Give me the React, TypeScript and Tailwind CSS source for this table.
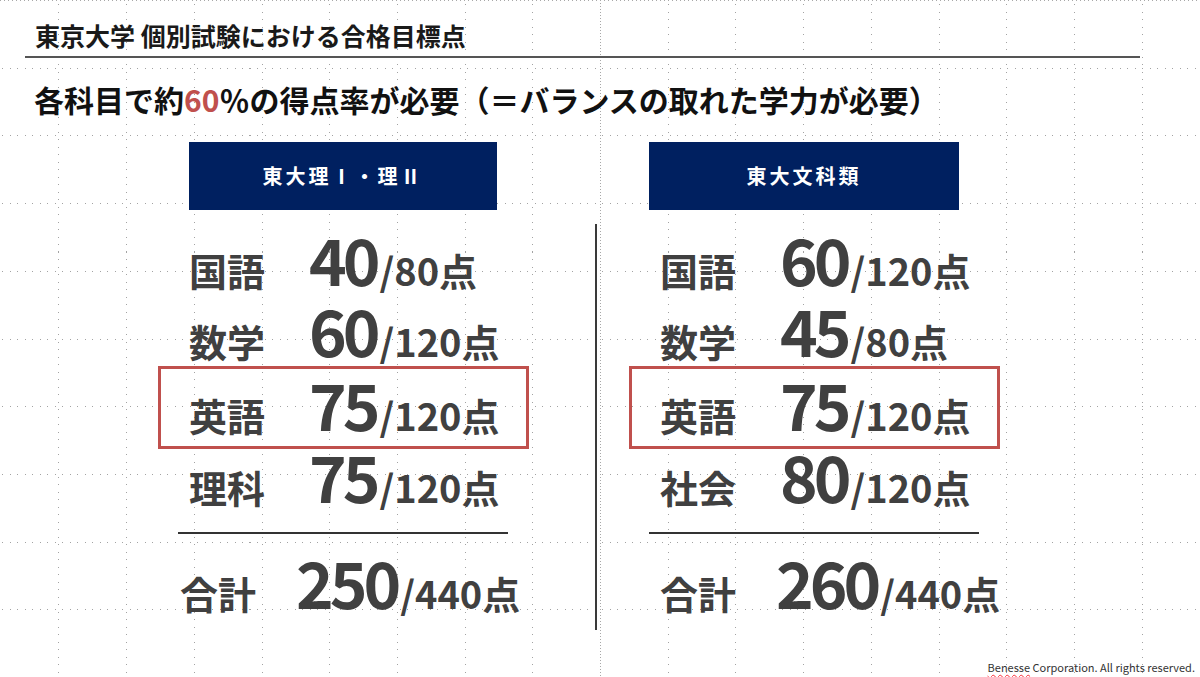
import React from 'react';

type Row = [string, string, string];

interface PanelProps {
  title: string;
  headerClass: string;
  rows: Row[];
  total: [string, string];
  totalClass: string;
}

const font = { fontFamily: '"Noto Sans CJK JP", "Noto Sans", sans-serif' };

const left: PanelProps = {
  title: '東大理Ⅰ・理Ⅱ',
  headerClass: 'ml-[31px] w-[308px]',
  rows: [
    ['国語', '40', '80'],
    ['数学', '60', '120'],
    ['英語', '75', '120'],
    ['理科', '75', '120'],
  ],
  total: ['250', '440'],
  totalClass: 'pl-[22px]',
};

const right: PanelProps = {
  title: '東大文科類',
  headerClass: 'ml-[20px] w-[310px]',
  rows: [
    ['国語', '60', '120'],
    ['数学', '45', '80'],
    ['英語', '75', '120'],
    ['社会', '80', '120'],
  ],
  total: ['260', '440'],
  totalClass: 'pl-[31px]',
};

// grid lines every 67.7px, centred on the slide
function GridLines() {
  const step = 67.7;
  const xs: number[] = [];
  for (let k = -8; k <= 8; k++) xs.push(Math.round(600 + k * step));
  const ys: number[] = [];
  for (let k = 1; k < 10; k++) ys.push(Math.round(k * step));
  return (
    <svg className="absolute inset-0" width="1200" height="677" shapeRendering="crispEdges">
      <line x1="0" y1="0.5" x2="1200" y2="0.5" stroke="#a8a8a8" strokeDasharray="1 3" />
      {ys.map((y) => (
        <line key={'h' + y} x1="2" y1={y + 0.5} x2="1200" y2={y + 0.5} stroke="#a3a3a3" strokeDasharray="1.3 6.2" />
      ))}
      {xs.map((x) =>
        x === 600 ? (
          <line key={'v' + x} x1={x + 0.5} y1="0" x2={x + 0.5} y2="677" stroke="#a8a8a8" strokeDasharray="1 2" />
        ) : (
          <line key={'v' + x} x1={x + 0.5} y1="4" x2={x + 0.5} y2="677" stroke="#a3a3a3" strokeDasharray="1.3 6.2" />
        )
      )}
    </svg>
  );
}

function ScoreLine({ label, score, max, labelWidth = 'w-[120px]' }: { label: string; score: string; max: string; labelWidth?: string }) {
  return (
    <div className="flex items-baseline leading-none whitespace-nowrap text-[#404040] font-bold">
      <span className={`${labelWidth} shrink-0 text-[38px]`}>{label}</span>
      <span className="shrink-0 text-[64px] tracking-[-4px]">{score}</span>
      <span className="shrink-0 text-[38px] ml-[3px]">/{max}点</span>
    </div>
  );
}

function Panel({ title, headerClass, rows, total, totalClass }: PanelProps) {
  return (
    <div className="w-[371px] shrink-0 flex flex-col">
      <div className={`${headerClass} h-[68px] bg-[#002060] flex items-center justify-center`}>
        <span className="text-white text-[20px] font-bold tracking-[3px] leading-none">{title}</span>
      </div>

      <div className="mt-[16px] pl-[31px]">
        <ScoreLine label={rows[0][0]} score={rows[0][1]} max={rows[0][2]} />
      </div>
      <div className="mt-[7px] pl-[31px]">
        <ScoreLine label={rows[1][0]} score={rows[1][1]} max={rows[1][2]} />
      </div>
      {/* highlighted english row */}
      <div className="mt-[5px] border-[3px] border-[#c0504d] pl-[28px] pt-[2px] pb-[11px]">
        <ScoreLine label={rows[2][0]} score={rows[2][1]} max={rows[2][2]} />
      </div>
      <div className="-mt-[6px] pl-[31px]">
        <ScoreLine label={rows[3][0]} score={rows[3][1]} max={rows[3][2]} />
      </div>

      <div className="mt-[25px] ml-[20px] w-[330px] h-[2px] bg-[#333333]" />

      <div className={`mt-[15px] ${totalClass}`}>
        <ScoreLine label="合計" score={total[0]} max={total[1]} labelWidth="w-[116px]" />
      </div>
    </div>
  );
}

export default function App() {
  return (
    <div className="relative w-[1200px] h-[677px] overflow-hidden bg-white" style={font}>
      <GridLines />
      <div className="relative flex flex-col h-full">
        <h1 className="pt-[23px] pl-[35px] text-[25px] font-bold leading-none text-[#1a1a1a]">
          東京大学 個別試験における合格目標点
        </h1>
        <div className="mt-[8px] ml-[25px] w-[1115px] h-[1.5px] bg-[#555555]" />

        <p className="mt-[26px] pl-[34px] text-[30px] font-bold leading-none text-[#111111] whitespace-nowrap">
          各科目で約<span className="text-[#c0504d]">60</span>％の得点率が必要（＝バランスの取れた学力が必要）
        </p>

        <div className="mt-[28px] flex pl-[158px]">
          <Panel {...left} />
          <div className="self-start mt-[82px] ml-[66px] w-[2px] h-[406px] bg-[#3a3a3a]" />
          <div className="ml-[32px]">
            <Panel {...right} />
          </div>
        </div>

        <div className="mt-auto pr-[5px] pb-[4px] text-right text-[11px] leading-none text-[#333333]">
          <span className="underline decoration-wavy decoration-red-500 decoration-1 underline-offset-2">Benesse</span> Corporation. All rights reserved.
        </div>
      </div>
    </div>
  );
}
